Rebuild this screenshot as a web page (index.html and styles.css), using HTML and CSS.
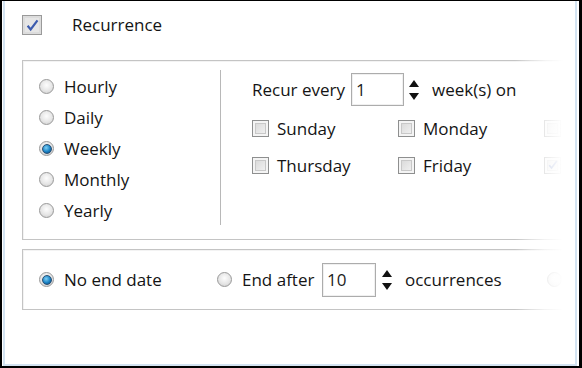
FILE: index.html
```html
<!DOCTYPE html>
<html>
<head>
<meta charset="utf-8">
<link rel="stylesheet" href="styles.css">
</head>
<body>
<div class="frame">
  <div class="window">
    <div class="header">
      <span class="check big checked">
        <svg viewBox="0 0 12 12" width="12" height="12"><path d="M1.5 6.2 L4.3 9.6 L10.6 1.2" fill="none" stroke="#3d5cae" stroke-width="2"/></svg>
      </span>
      <span class="title">Recurrence</span>
    </div>

    <div class="panel pattern">
      <div class="freq">
        <label class="opt"><span class="radio"></span>Hourly</label>
        <label class="opt"><span class="radio"></span>Daily</label>
        <label class="opt"><span class="radio on"></span>Weekly</label>
        <label class="opt"><span class="radio"></span>Monthly</label>
        <label class="opt"><span class="radio"></span>Yearly</label>
      </div>
      <div class="divider"></div>
      <div class="detail">
        <div class="recur">
          <span class="lbl">Recur every</span>
          <span class="field">1</span>
          <span class="spin"><i class="up"></i><i class="down"></i></span>
          <span class="unit">week(s) on</span>
        </div>
        <div class="days">
          <label class="day"><span class="check"></span>Sunday</label>
          <label class="day"><span class="check"></span>Monday</label>
          <label class="day"><span class="check"></span></label>
          <label class="day"><span class="check"></span>Thursday</label>
          <label class="day"><span class="check"></span>Friday</label>
          <label class="day"><span class="check checked">
            <svg viewBox="0 0 12 12" width="10" height="10"><path d="M1.5 6.2 L4.3 9.6 L10.6 1.2" fill="none" stroke="#3d5cae" stroke-width="2"/></svg>
          </span></label>
        </div>
      </div>
    </div>

    <div class="panel range">
      <label class="opt end1"><span class="radio on"></span>No end date</label>
      <label class="opt end2"><span class="radio"></span>End after</label>
      <span class="field small">10</span>
      <span class="spin"><i class="up"></i><i class="down"></i></span>
      <span class="unit2">occurrences</span>
      <span class="radio end3"></span>
    </div>

    <div class="fade"></div>
  </div>
</div>
</body>
</html>
```

FILE: styles.css
```css
* { box-sizing: border-box; }
html, body { margin: 0; padding: 0; background: #fff; }
body {
  width: 582px;
  height: 368px;
  overflow: hidden;
  font-family: "Open Sans", "Noto Sans", sans-serif;
  font-size: 17px;
  color: #141414;
}
.frame {
  width: 582px;
  height: 368px;
  border-style: solid;
  border-color: #000;
  border-width: 1px 3px 2px 2px;
  padding: 0 2px 0 1px;
  background: #fff;
}
.window {
  position: relative;
  height: 100%;
  border-style: solid;
  border-color: #d3e3f1;
  border-width: 0 2px 2px 2px;
  overflow: hidden;
  background: #fff;
}
.header {
  display: flex;
  align-items: center;
  margin: 14px 0 0 17px;
  height: 20px;
}
.title { margin-left: 30px; line-height: 20px; }

.check {
  display: inline-flex;
  align-items: center;
  justify-content: center;
  width: 17px;
  height: 17px;
  border: 1px solid #8e8f8f;
  background: linear-gradient(135deg, #d4d4d4, #f6f6f6);
  box-shadow: inset 0 0 0 2px #f4f4f4, inset 0 0 0 3px #c8c8c8;
  flex: none;
}
.check.big { width: 20px; height: 20px; background: #e6e6e6; box-shadow: inset 0 0 0 2px #dcdcdc; border-color: #9a9a9a; }
.check.big svg { width: 13px; height: 13px; }

.panel {
  margin-left: 17px;
  width: 620px;
  border: 1px solid #c4c4c4;
  box-shadow: inset 1px 1px 0 #f3f3f3;
}
.pattern {
  margin-top: 25px;
  height: 180px;
  display: flex;
}
.freq {
  flex: none;
  width: 197px;
  padding: 10px 0 0 16px;
  display: flex;
  flex-direction: column;
}
.opt {
  display: flex;
  align-items: center;
  height: 31px;
  white-space: nowrap;
}
.radio {
  width: 15px;
  height: 15px;
  border-radius: 50%;
  border: 1px solid #999;
  background: radial-gradient(circle at 50% 40%, #fdfdfd 0%, #e6e6e6 55%, #c8c8c8 100%);
  margin-right: 10px;
  flex: none;
  display: flex;
  align-items: center;
  justify-content: center;
}
.radio.on::after {
  content: "";
  width: 8px;
  height: 8px;
  border-radius: 50%;
  background: radial-gradient(circle at 40% 35%, #7fd0f5 0%, #1a82c4 55%, #0b3f6e 100%);
  border: 1px solid #2a4f73;
}
.divider {
  width: 1px;
  background: #b8b8b8;
  margin: 9px 0 14px 0;
  flex: none;
}
.detail {
  flex: none;
  padding: 12px 0 0 31px;
}
.recur {
  display: flex;
  align-items: center;
  height: 33px;
}
.lbl { width: 99px; white-space: nowrap; }
.field {
  display: inline-flex;
  align-items: center;
  width: 53px;
  height: 33px;
  border: 1px solid #acacac;
  box-shadow: inset 0 0 0 1px #f0f0f0;
  padding-left: 4px;
  color: #1c1c1c;
  flex: none;
}
.spin {
  display: inline-flex;
  flex-direction: column;
  justify-content: center;
  gap: 6px;
  margin-left: 5px;
  width: 12px;
  flex: none;
}
.spin i { display: block; width: 0; height: 0; border-left: 5.5px solid transparent; border-right: 5.5px solid transparent; }
.spin .up { border-bottom: 7px solid #111; }
.spin .down { border-top: 7px solid #111; }
.unit { margin-left: 11px; white-space: nowrap; }
.days {
  display: grid;
  grid-template-columns: 146px 146px 146px;
  row-gap: 13px;
  margin-top: 10px;
}
.day {
  display: flex;
  align-items: center;
  height: 24px;
  white-space: nowrap;
}
.day .check { margin-right: 8px; }
.range {
  margin-top: 9px;
  height: 61px;
  display: flex;
  align-items: center;
  padding-left: 16px;
}
.end1 { width: 178px; flex: none; }
.end2 { width: 105px; flex: none; }
.range .field { width: 54px; height: 34px; }
.range .spin { margin-left: 6px; }
.unit2 { margin-left: 11px; width: 142px; flex: none; }
.end3 { margin: 0; }

.fade {
  position: absolute;
  top: 0;
  right: 0;
  bottom: 0;
  width: 60px;
  background: linear-gradient(to right, rgba(255,255,255,0) 0px, rgba(255,255,255,0.45) 15px, rgba(255,255,255,0.8) 30px, #fff 48px);
}
```
